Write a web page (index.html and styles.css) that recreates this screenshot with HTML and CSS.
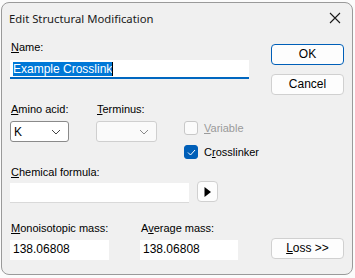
FILE: index.html
```html
<!doctype html>
<html lang="en">
<head>
    <meta charset="UTF-8">
    <title>Edit Structural Modification</title>
    <link rel="stylesheet" href="styles.css">
</head>
<body>
    <div class="window">
        <div class="titlebar">
            <span class="title">Edit Structural Modification</span>
            <svg class="close" width="12" height="12" viewBox="0 0 12 12">
                <path d="M1 1 L11 11 M11 1 L1 11" stroke="#1a1a1a" stroke-width="1.1" fill="none"/>
            </svg>
        </div>
        <div class="content">
            <div class="form">
                <div class="label"><u>N</u>ame:</div>
                <div class="edit name-edit"><span class="sel">Example Crosslink</span><span class="caret"></span></div>

                <div class="row row-select">
                    <div class="field amino">
                        <div class="label"><u>A</u>mino acid:</div>
                        <div class="combo">
                            <span>K</span>
                            <svg width="10" height="6" viewBox="0 0 10 6"><path d="M1 1 L5 5 L9 1" stroke="#444" fill="none"/></svg>
                        </div>
                    </div>
                    <div class="field terminus">
                        <div class="label"><u>T</u>erminus:</div>
                        <div class="combo disabled">
                            <span></span>
                            <svg width="10" height="6" viewBox="0 0 10 6"><path d="M1 1 L5 5 L9 1" stroke="#8a8a8a" fill="none"/></svg>
                        </div>
                    </div>
                    <div class="checks">
                        <div class="check disabled"><span class="box"></span><span><u>V</u>ariable</span></div>
                        <div class="check"><span class="box on"><svg width="9" height="7" viewBox="0 0 9 7"><path d="M1 3.5 L3.5 6 L8 1" stroke="#fff" stroke-width="1" fill="none"/></svg></span><span>C<u>r</u>osslinker</span></div>
                    </div>
                </div>

                <div class="label formula-label"><u>C</u>hemical formula:</div>
                <div class="row">
                    <div class="edit formula-edit"></div>
                    <div class="arrow-btn"><svg width="7" height="10" viewBox="0 0 7 10"><path d="M0.5 0 L7 5 L0.5 10 Z" fill="#000"/></svg></div>
                </div>

                <div class="row row-mass">
                    <div class="field mono">
                        <div class="label"><u>M</u>onoisotopic mass:</div>
                        <div class="edit mass-edit">138.06808</div>
                    </div>
                    <div class="field avg">
                        <div class="label">A<u>v</u>erage mass:</div>
                        <div class="edit mass-edit">138.06808</div>
                    </div>
                </div>
            </div>
            <div class="buttons">
                <div class="btn default">OK</div>
                <div class="btn">Cancel</div>
                <div class="btn loss"><u>L</u>oss &gt;&gt;</div>
            </div>
        </div>
    </div>
</body>
</html>
```

FILE: styles.css
```css
* {
    margin: 0;
    padding: 0;
    box-sizing: border-box;
}

body {
    background: #fbfbfb;
    padding: 2px 0 0 1px;
    font-family: "Liberation Sans", Arial, sans-serif;
    font-size: 11px;
    color: #000;
}

.window {
    width: 352px;
    height: 273px;
    background: #f0f0f0;
    border: 1px solid #9a9a9a;
    border-radius: 8px;
    overflow: hidden;
}

.titlebar {
    height: 30px;
    display: flex;
    align-items: center;
    justify-content: space-between;
    padding: 0 11px 0 7px;
}

.title {
    font-family: "Noto Sans", "Open Sans", sans-serif;
    font-size: 11.3px;
    color: #1a1a1a;
}

.content {
    display: flex;
    padding: 8px 0 0 8px;
}

.form {
    width: 260px;
}

.label {
    line-height: 13px;
    padding-left: 1px;
    white-space: nowrap;
}

.label u,
.check u,
.btn u {
    text-decoration-thickness: 1px;
    text-underline-offset: 1px;
}

/* edit boxes */
.edit {
    background: #fff;
    height: 20px;
    line-height: 19px;
    padding-left: 3px;
    border-bottom: 1px solid #d9d9d9;
    font-size: 11px;
}

.name-edit {
    width: 239px;
    height: 19px;
    margin-top: 6px;
    border-bottom: 2px solid #0067c0;
    display: flex;
    align-items: center;
    font-size: 12px;
}

.sel {
    background: #0078d7;
    color: #fff;
    line-height: 14px;
}

.caret {
    width: 1px;
    height: 14px;
    background: #000;
}

.row {
    display: flex;
}

.row-select {
    margin-top: 24px;
    height: 58px;
}

.field .combo,
.field .edit {
    margin-top: 5px;
}

.amino {
    width: 86px;
}

.terminus {
    width: 88px;
}

.combo {
    height: 21px;
    background: #fff;
    border: 1px solid #8a8a8a;
    border-radius: 3px;
    display: flex;
    align-items: center;
    justify-content: space-between;
    padding: 0 7px 0 3px;
    font-size: 12px;
}

.amino .combo {
    width: 59px;
}

.terminus .combo {
    width: 61px;
}

.combo.disabled {
    background: #fafafa;
    border-color: #cfcfcf;
}

.checks {
    padding-top: 18px;
    display: flex;
    flex-direction: column;
    gap: 10px;
}

.check {
    display: flex;
    align-items: center;
    gap: 6px;
    line-height: 14px;
}

.check .box {
    width: 14px;
    height: 14px;
    border: 1px solid #8a8a8a;
    border-radius: 3px;
    background: #fbfbfb;
    display: flex;
    align-items: center;
    justify-content: center;
}

.check.disabled {
    color: #9a9a9a;
}

.check.disabled .box {
    border-color: #c8c8c8;
}

.check .box.on {
    background: #005fb8;
    border-color: #005fb8;
}

.formula-label {
    margin-top: 5px;
}

.formula-edit {
    width: 179px;
    margin-top: 4px;
}

.arrow-btn {
    width: 21px;
    height: 21px;
    margin: 2px 0 0 8px;
    background: #fdfdfd;
    border: 1px solid #d0d0d0;
    border-radius: 4px;
    display: flex;
    align-items: center;
    justify-content: center;
}

.row-mass {
    margin-top: 19px;
}

.mass-edit {
    margin-top: 1px;
    border-bottom: none;
    font-size: 12px;
}

.mono {
    width: 130px;
}

.mono .mass-edit {
    width: 99px;
}

.avg .mass-edit {
    width: 98px;
}

/* buttons */
.buttons {
    width: 73px;
    margin-left: 1px;
    padding-top: 3px;
    display: flex;
    flex-direction: column;
    height: 218px;
}

.btn {
    height: 21px;
    background: #fdfdfd;
    border: 1px solid #d0d0d0;
    border-radius: 4px;
    text-align: center;
    line-height: 19px;
    font-size: 12px;
    margin-bottom: 9px;
}

.btn.default {
    border-color: #005fb8;
}

.btn.loss {
    margin-top: auto;
    margin-bottom: 0;
}
```
